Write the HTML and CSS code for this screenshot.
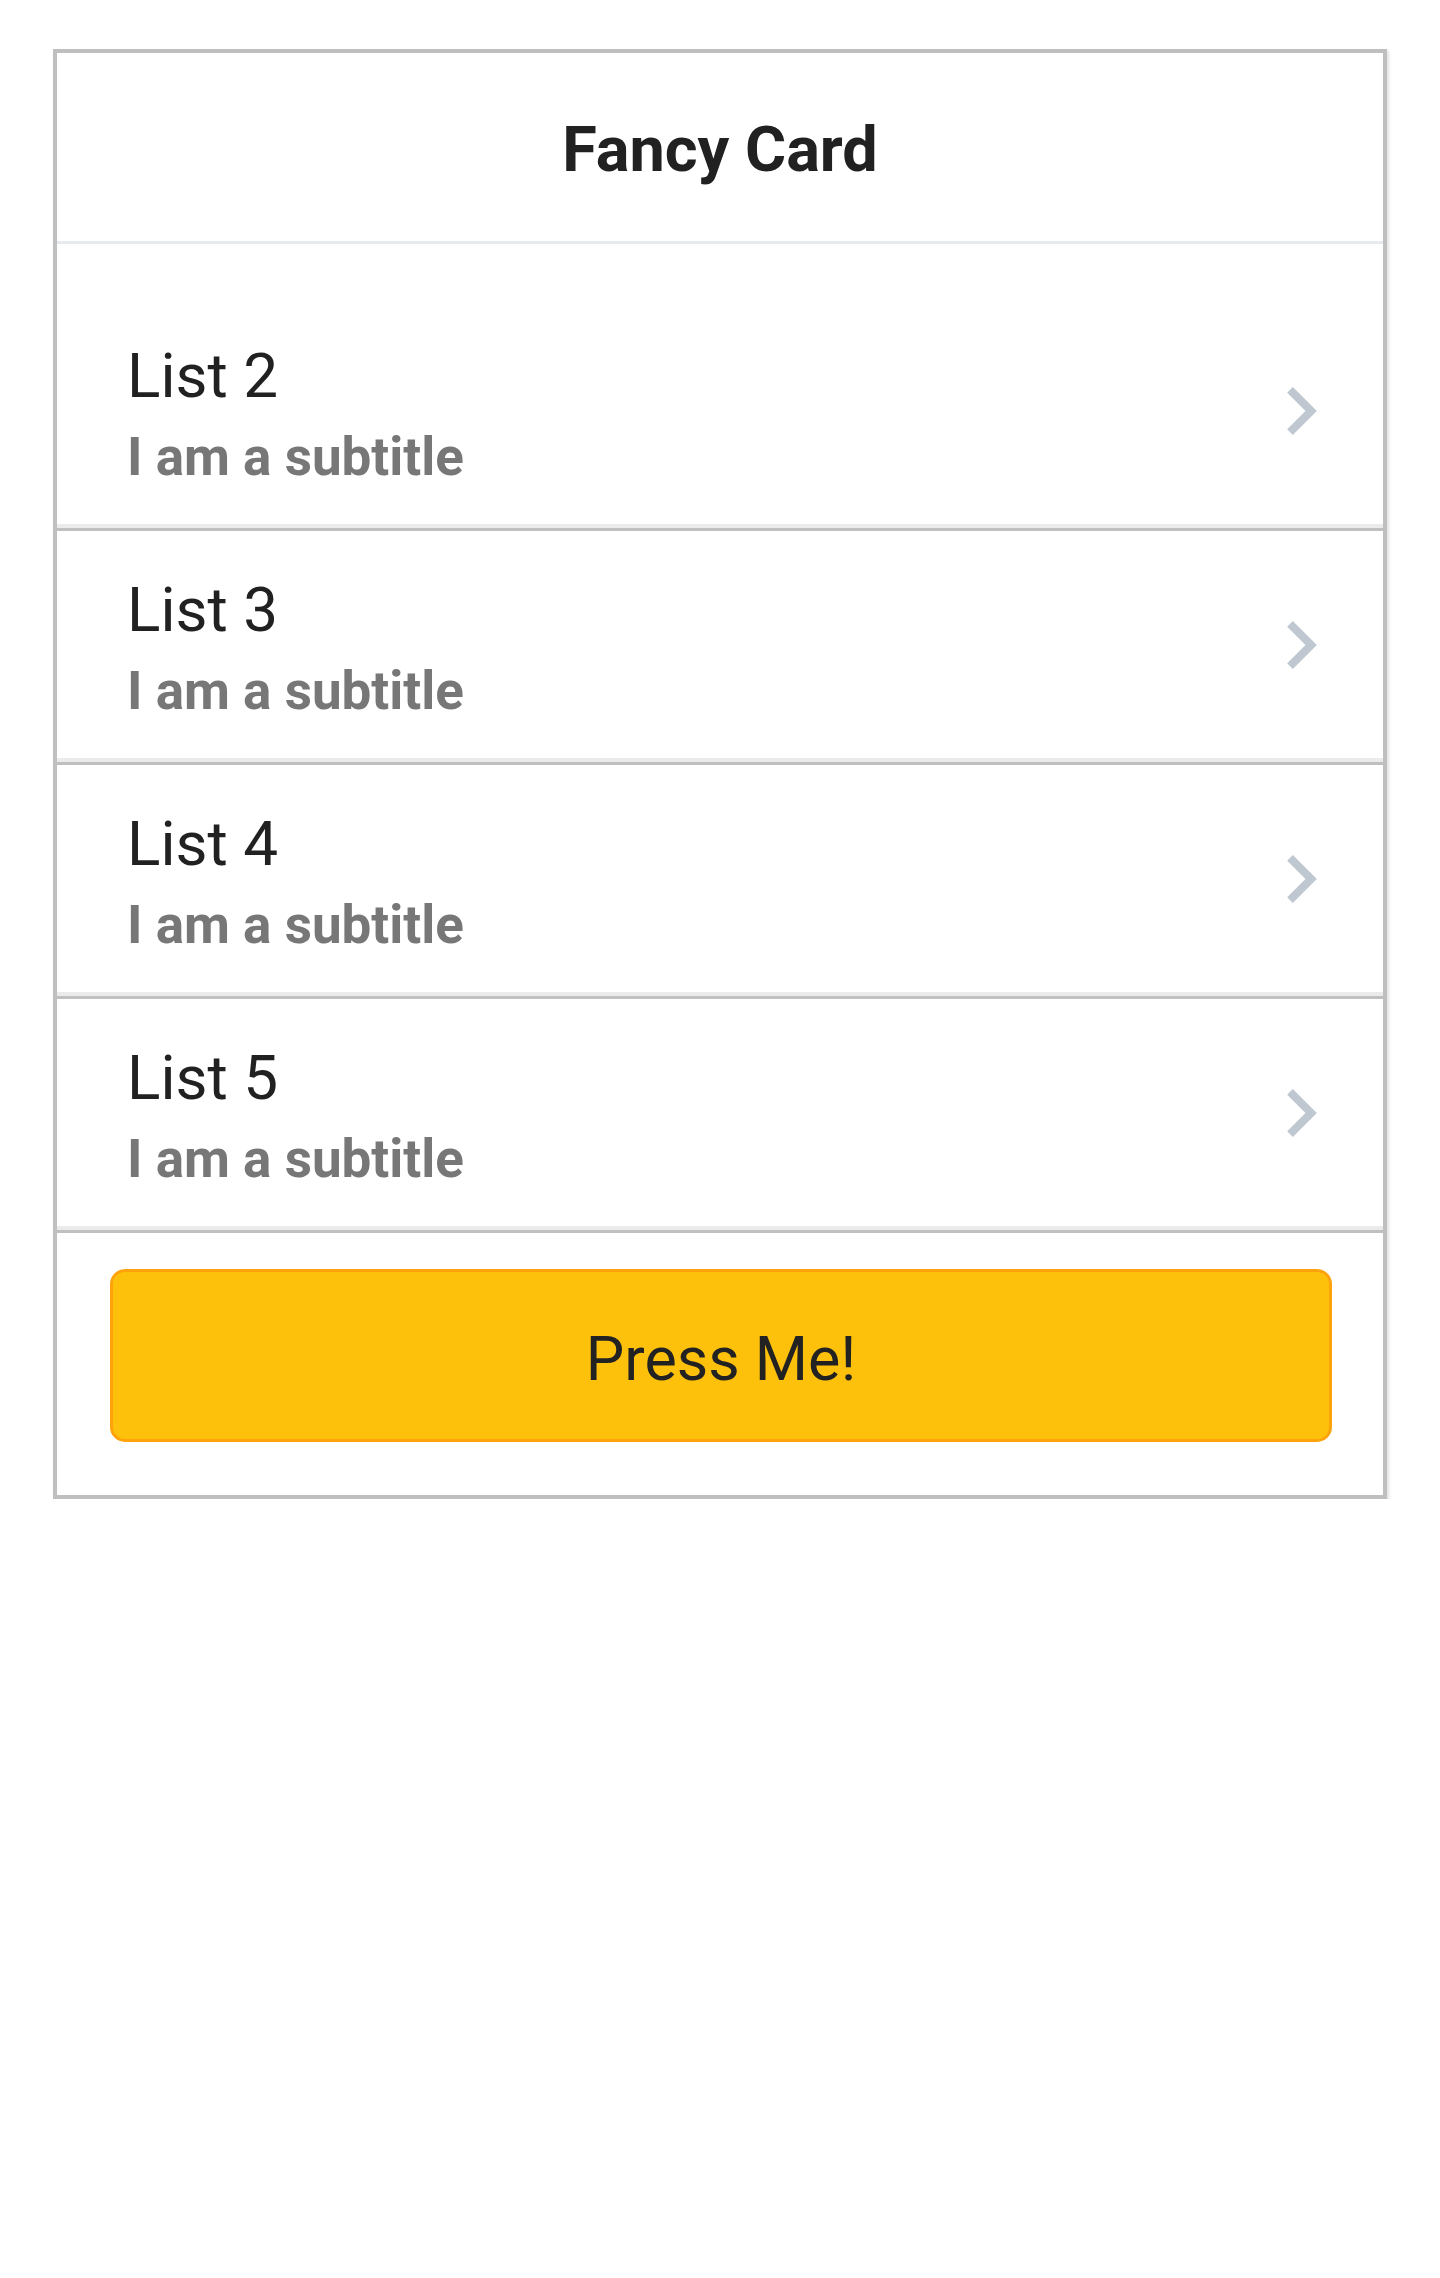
FILE: index.html
```html
<!DOCTYPE html>
<html lang="en">
<head>
<meta charset="utf-8">
<title>Fancy Card</title>
<link rel="stylesheet" href="styles.css">
</head>
<body>
<div class="card">
  <div class="card-header">
    <h1 class="card-title">Fancy Card</h1>
  </div>
  <ul class="list">
    <li class="list-item">
      <div class="item-text">
        <div class="item-title">List 2</div>
        <div class="item-subtitle">I am a subtitle</div>
      </div>
      <svg class="chevron" viewBox="8.59 6 7.41 12" width="30" height="48"><path d="M10 6L8.59 7.41 13.17 12l-4.58 4.59L10 18l6-6z"/></svg>
    </li>
    <li class="list-item">
      <div class="item-text">
        <div class="item-title">List 3</div>
        <div class="item-subtitle">I am a subtitle</div>
      </div>
      <svg class="chevron" viewBox="8.59 6 7.41 12" width="30" height="48"><path d="M10 6L8.59 7.41 13.17 12l-4.58 4.59L10 18l6-6z"/></svg>
    </li>
    <li class="list-item">
      <div class="item-text">
        <div class="item-title">List 4</div>
        <div class="item-subtitle">I am a subtitle</div>
      </div>
      <svg class="chevron" viewBox="8.59 6 7.41 12" width="30" height="48"><path d="M10 6L8.59 7.41 13.17 12l-4.58 4.59L10 18l6-6z"/></svg>
    </li>
    <li class="list-item">
      <div class="item-text">
        <div class="item-title">List 5</div>
        <div class="item-subtitle">I am a subtitle</div>
      </div>
      <svg class="chevron" viewBox="8.59 6 7.41 12" width="30" height="48"><path d="M10 6L8.59 7.41 13.17 12l-4.58 4.59L10 18l6-6z"/></svg>
    </li>
  </ul>
  <div class="card-footer">
    <button class="press-btn" type="button">Press Me!</button>
  </div>
</div>
</body>
</html>
```

FILE: styles.css
```css
html, body {
  margin: 0;
  padding: 0;
  background: #ffffff;
}

body {
  font-family: Roboto, "Liberation Sans", sans-serif;
  padding: 49px 53px 0 53px;
}

.card {
  border: 4px solid #bfbfbf;
  background: #ffffff;
  box-shadow: 2px 2px 3px rgba(0, 0, 0, 0.12);
}

.card-header {
  box-sizing: border-box;
  height: 191px;
  padding-top: 5px;
  display: flex;
  align-items: center;
  justify-content: center;
  border-bottom: 3px solid #e7eaee;
}

.card-title {
  margin: 0;
  font-size: 63px;
  line-height: 74px;
  font-weight: 700;
  color: #212121;
}

.list {
  list-style: none;
  margin: 0;
  padding: 53px 0 0 0;
}

.list-item {
  display: flex;
  align-items: center;
  justify-content: space-between;
  padding: 42px 66px 40px 70px;
  border-bottom: 3px solid #c0c0c0;
  box-shadow: inset 0 -4px 0 #ebebeb;
}

.item-text {
  display: flex;
  flex-direction: column;
}

.item-title {
  font-size: 62px;
  line-height: 74px;
  color: #212121;
}

.item-subtitle {
  margin-top: 13px;
  font-size: 53px;
  line-height: 62px;
  font-weight: 700;
  color: #777777;
}

.chevron {
  display: block;
  margin-bottom: 5px;
  fill: #bfc7d0;
}

.card-footer {
  padding: 36px 51px 53px 53px;
}

.press-btn {
  display: block;
  width: 100%;
  height: 173px;
  margin: 0;
  padding: 7px 0 0 0;
  border: 3px solid #ffa30d;
  border-radius: 15px;
  background: #fec10b;
  font-family: Roboto, "Liberation Sans", sans-serif;
  font-size: 61px;
  color: #222222;
  cursor: pointer;
}
```
